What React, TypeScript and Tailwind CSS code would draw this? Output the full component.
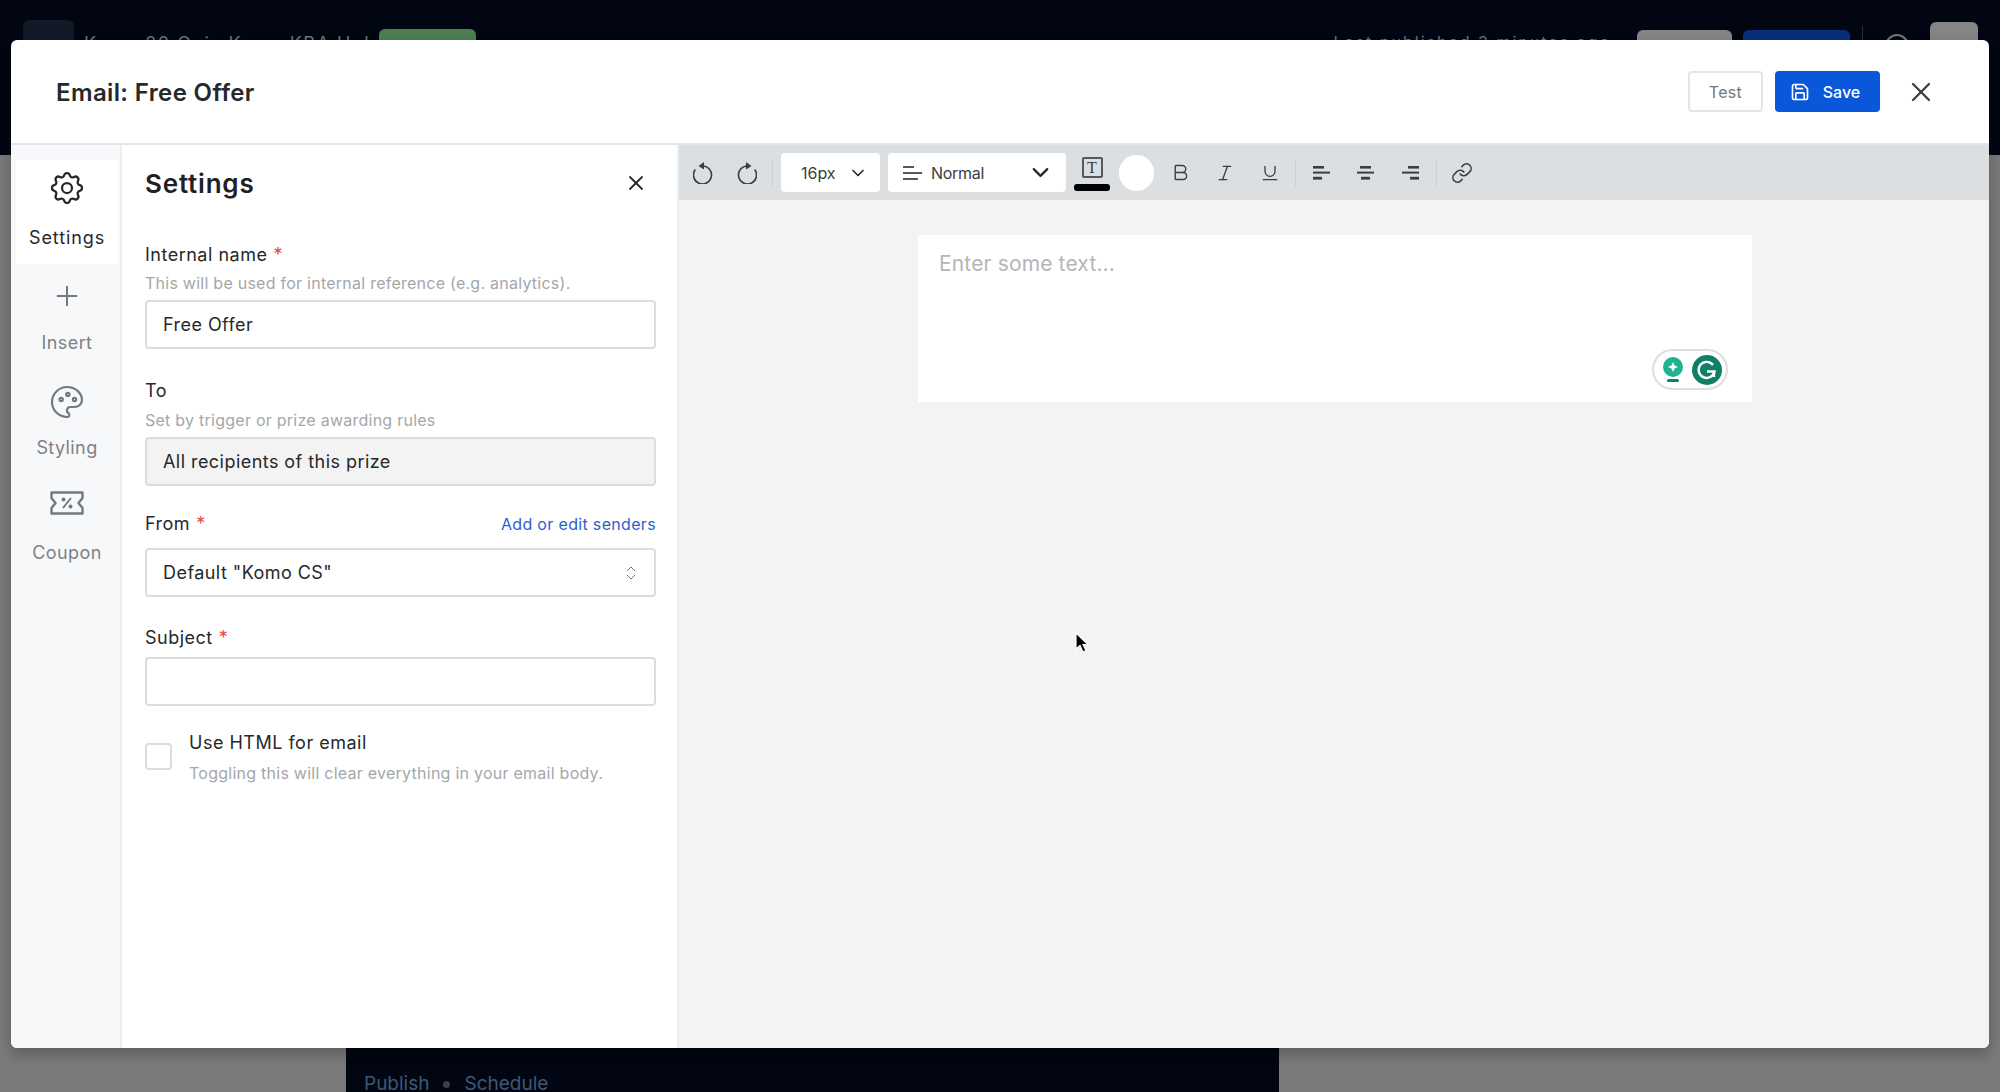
import { Bold, ChevronDown, ChevronsUpDown, Italic, Link, Plus, Save, Underline, X } from "lucide-react";
import { TbPalette, TbSettings } from "react-icons/tb";
import type { ReactNode } from "react";

const Coupon = () => (
  <svg width="34" height="24" viewBox="0 0 34 24" fill="none" stroke="#74787d" strokeWidth="2.4" strokeLinejoin="round">
    <path d="M1.5 1.5h31v5.5l-4 5 4 5v5.5h-31V17l4-5-4-5z" />
    <path d="M13 17l8-10" strokeWidth="2" />
    <circle cx="13.5" cy="8.5" r="0.8" fill="#74787d" />
    <circle cx="20.5" cy="15.5" r="0.8" fill="#74787d" />
  </svg>
);

// circle with the little head on top, flipped for redo
const UndoIcon = ({ flip }: { flip?: boolean }) => (
  <svg width="20" height="22" viewBox="0 0 20 22" fill="none" className={flip ? "-scale-x-100" : ""}>
    <path d="M9.5 4a9 9 0 1 1-7.2 3.6" stroke="#3a3d42" strokeWidth="1.6" />
    <path d="M5.5 4l5.5-4v7.5z" fill="#3a3d42" />
  </svg>
);

const AlignBars = ({ x }: { x: number[] }) => (
  <svg width="17" height="14" viewBox="0 0 17 14" fill="#3a3d42">
    <rect x={x[0]} y="0" width="11" height="2.6" />
    <rect x="0" y="5.6" width="17" height="2" />
    <rect x={x[1]} y="10.8" width="9" height="2.8" />
  </svg>
);

const sideItems: { label: string; icon: ReactNode; box: string; text: string }[] = [
  { label: "Insert", icon: <Plus size={32} strokeWidth={1.5} color="#74787d" />, box: "pt-[16px]", text: "mt-[19px]" },
  { label: "Styling", icon: <TbPalette size={40} strokeWidth={1.3} color="#74787d" className="-my-[4px]" />, box: "pt-[31px]", text: "mt-[18px]" },
  { label: "Coupon", icon: <span className="flex h-8 items-center"><Coupon /></span>, box: "pt-[27px]", text: "mt-[22px]" },
];

const Label = ({ children, required }: { children: string; required?: boolean }) => (
  <div className="text-[18px] leading-6 tracking-[0.5px] text-[#26282b]">
    {children}
    {required && <span className="ml-[6px] text-[#e5484d]">*</span>}
  </div>
);

const Hint = ({ children, className }: { children: string; className: string }) => (
  <div className={"text-[16px] leading-5 tracking-[0.25px] text-[#a5a7aa] " + className}>{children}</div>
);

const fieldClass = "flex h-[49px] w-full items-center rounded-[4px] border-2 border-[#d9dce0] px-[16px] text-[18px] tracking-[0.45px] text-[#26282b]";

export default function App() {
  return (
    <div className="relative h-screen w-full overflow-hidden bg-[#020612] font-['Inter',sans-serif]">
      {/* page behind the dialog, mostly hidden */}
      <div className="flex h-[155px] justify-between pl-[23px] pr-[22px]">
        <div className="flex items-start">
          <div className="mt-[20px] h-[51px] w-[51px] rounded-md bg-[#111a26]" />
          <div className="ml-[10px] mt-[30px] w-[280px] text-[18px] tracking-[1.5px] whitespace-nowrap text-[#6b7280]">Komo 20 Quiz Komo KBA Hub</div>
          <div className="ml-[15px] mt-[29px] h-[40px] w-[97px] rounded-md bg-[#4b7f52]" />
        </div>
        <div className="flex items-start">
          <div className="mr-[26px] mt-[30px] text-[16px] tracking-[2px] whitespace-nowrap text-[#6b7280]">Last published 3 minutes ago</div>
          <div className="mt-[30px] h-[40px] w-[95px] rounded-md bg-[#858585]" />
          <div className="ml-[11px] mt-[30px] h-[40px] w-[107px] rounded-md bg-[#0a2f78]" />
          <div className="ml-[12px] mt-[26px] h-[40px] w-px bg-[#2a2f38]" />
          <div className="ml-[22px] mt-[34px] h-[24px] w-[24px] rounded-full border-2 border-[#777]" />
          <div className="ml-[21px] mt-[22px] h-[48px] w-[48px] rounded-md bg-[#858585]" />
        </div>
      </div>
      <div className="flex h-[937px]">
        <div className="w-[346px] bg-[#7a7a7a]" />
        <div className="flex w-[933px] items-end bg-[#020612] pl-[18px]">
          <div className="flex items-center gap-[14px] text-[19px] leading-[16px] text-[#3d5878]">
            <span>Publish</span>
            <span className="h-[7px] w-[7px] rounded-full bg-[#3a4048]" />
            <span>Schedule</span>
          </div>
        </div>
        <div className="flex-1 bg-[#7a7a7a]" />
      </div>

      {/* dialog */}
      <div className="absolute left-[11px] top-[40px] flex h-[1008px] w-[1978px] flex-col overflow-hidden rounded-[6px] bg-white shadow-[0_6px_14px_rgba(0,0,0,0.25)]">
        <div className="flex h-[105px] shrink-0 items-center border-b-2 border-[#e3e5e8] pl-[45px] pr-[52px]">
          <div className="pt-[2px] text-[24px] font-semibold tracking-[0.37px] text-[#26282b]">Email: Free Offer</div>
          <div className="ml-auto flex h-[41px] w-[75px] items-center justify-center rounded-[4px] border-2 border-[#e3e5e8] text-[16px] tracking-[0.3px] text-[#74777b]">Test</div>
          <div className="ml-[12px] flex h-[41px] w-[105px] items-center justify-center gap-[13px] rounded-[4px] bg-[#0b57d9] pr-[5px] text-[16px] font-medium text-white">
            <Save size={20} strokeWidth={2} />
            <span>Save</span>
          </div>
          <X size={32} strokeWidth={1.7} color="#3a3d42" className="ml-[25px]" />
        </div>

        <div className="flex min-h-0 flex-1">
          <div className="w-[111px] shrink-0 border-r-2 border-[#eceef0] bg-[#f7f8fa] pl-[5px] pt-[15px] text-[18px] leading-6 tracking-[0.4px]">
            <div className="flex h-[104px] w-[102px] flex-col items-center bg-white pt-[12px] text-[#26282b]">
              <TbSettings size={40} strokeWidth={1.35} color="#26282b" className="-my-[4px]" />
              <div className="mt-[22px] tracking-[0.9px]">Settings</div>
            </div>
            {sideItems.map((item) => (
              <div key={item.label} className={"flex w-[102px] flex-col items-center text-[#7e8185] " + item.box}>
                {item.icon}
                <div className={item.text}>{item.label}</div>
              </div>
            ))}
          </div>

          <div className="w-[557px] shrink-0 border-r-2 border-[#eceef0] pl-[23px] pr-[21px] pt-[24px]">
            <div className="flex h-[28px] items-center justify-between">
              <div className="text-[26px] font-semibold tracking-[0.8px] text-[#1f2124]">Settings</div>
              <X size={24} strokeWidth={1.8} color="#26282b" className="mr-[8px]" />
            </div>

            <div className="mt-[46px]"><Label required>Internal name</Label></div>
            <Hint className="mt-[6px]">This will be used for internal reference (e.g. analytics).</Hint>
            <div className={fieldClass + " mt-[7px]"}>Free Offer</div>

            <div className="mt-[30px]"><Label>To</Label></div>
            <Hint className="mt-[7px]">Set by trigger or prize awarding rules</Hint>
            <div className={fieldClass + " mt-[7px] bg-[#f3f3f3]"}>All recipients of this prize</div>

            <div className="mt-[26px] flex items-center justify-between">
              <Label required>From</Label>
              <a className="text-[16px] tracking-[0.33px] text-[#2b5fcf]">Add or edit senders</a>
            </div>
            <div className={fieldClass + " mt-[12px] justify-between"}>
              <span>Default "Komo CS"</span>
              <ChevronsUpDown size={18} strokeWidth={1.3} color="#6b6e72" className="-mr-[2px]" />
            </div>

            <div className="mt-[29px]"><Label required>Subject</Label></div>
            <div className={fieldClass + " mt-[7px]"} />

            <div className="mt-[25px] flex items-start gap-[17px]">
              <div className="mt-[12px] h-[27px] w-[27px] shrink-0 rounded-[4px] border-2 border-[#d9dce0]" />
              <div>
                <Label>Use HTML for email</Label>
                <Hint className="mt-[8px]">Toggling this will clear everything in your email body.</Hint>
              </div>
            </div>
          </div>

          <div className="flex min-w-0 flex-1 flex-col bg-[#f3f3f3]">
            <div className="flex h-[55px] shrink-0 items-center bg-[#dcdfe1] pl-[14px] text-[#3a3d42]">
              <UndoIcon />
              <span className="ml-[24px] flex"><UndoIcon flip /></span>
              <div className="ml-[15px] h-[30px] w-px bg-[#d0d3d6]" />
              <div className="ml-[8px] flex h-[39px] w-[99px] items-center rounded-[4px] bg-white pl-[20px] text-[16px] text-[#3a3d42]">
                16px
                <ChevronDown size={20} strokeWidth={2} color="#26282b" className="ml-[12px]" />
              </div>
              <div className="ml-[8px] flex h-[39px] w-[178px] items-center rounded-[4px] bg-white pl-[15px] text-[16px] tracking-[-0.3px] text-[#3a3d42]">
                <svg width="19" height="14" viewBox="0 0 19 14" fill="#55585c">
                  <rect width="11" height="2" />
                  <rect y="6" width="19" height="2" />
                  <rect y="12" width="15" height="2" />
                </svg>
                <span className="ml-[9px]">Normal</span>
                <ChevronDown size={27} strokeWidth={2} color="#26282b" className="ml-auto mr-[12px]" />
              </div>
              <div className="ml-[8px] flex w-[36px] flex-col items-center pt-[3px]">
                <div className="flex h-[21px] w-[21px] items-center justify-center rounded-[2px] border-2 border-[#55585c] text-[16px] leading-none font-['Liberation_Serif',serif] text-[#3a3d42]">T</div>
                <div className="mt-[6px] h-[7px] w-[36px] rounded-[3px] bg-black" />
              </div>
              <div className="ml-[9px] h-[36px] w-[35px] rounded-full bg-white" />
              <Bold size={21} strokeWidth={1.6} className="ml-[16px]" />
              <Italic size={20} strokeWidth={1.6} className="ml-[24px]" />
              <Underline size={20} strokeWidth={1.6} className="ml-[25px]" />
              <div className="ml-[15px] h-[30px] w-px bg-[#d0d3d6]" />
              <span className="ml-[17px] flex"><AlignBars x={[0, 0]} /></span>
              <span className="ml-[27px] flex"><AlignBars x={[3, 4]} /></span>
              <span className="ml-[28px] flex"><AlignBars x={[6, 8]} /></span>
              <div className="ml-[17px] h-[30px] w-px bg-[#d0d3d6]" />
              <Link size={22} strokeWidth={1.7} className="ml-[14px]" />
            </div>
            <div className="ml-[239px] mt-[35px] flex h-[167px] w-[834px] flex-col bg-white pl-[21px] pt-[15px]">
              <div className="text-[21px] leading-7 tracking-[0.15px] text-[#b5b6b8]">Enter some text...</div>
              <div className="mr-[24px] ml-auto mt-[71px] flex h-[41px] w-[76px] items-center gap-[9px] rounded-full border-2 border-[#dcdedf] pl-[9px]">
                <svg width="20" height="26" viewBox="0 0 20 26">
                  <circle cx="10" cy="10" r="10" fill="#1db48f" />
                  <path d="M10 5l1.6 3.4L15 10l-3.4 1.6L10 15l-1.6-3.4L5 10l3.4-1.6z" fill="white" />
                  <rect x="4" y="22" width="12" height="3" rx="1.5" fill="#11806a" />
                </svg>
                <svg width="30" height="30" viewBox="0 0 30 30">
                  <circle cx="15" cy="15" r="15" fill="#0f7f68" />
                  <path d="M21 10a8 8 0 1 0 1.5 6.5H15" fill="none" stroke="white" strokeWidth="2.4" />
                  <path d="M22 17v5" fill="none" stroke="white" strokeWidth="2.4" />
                </svg>
              </div>
            </div>
          </div>
        </div>
      </div>

      {/* mouse pointer */}
      <svg className="absolute left-[1074px] top-[631px]" width="16" height="24" viewBox="0 0 16 24">
        <path d="M2 2v16l4-3.5 3 6.5 3-1.5-3-6h5z" fill="black" stroke="white" strokeWidth="1.2" />
      </svg>
    </div>
  );
}
